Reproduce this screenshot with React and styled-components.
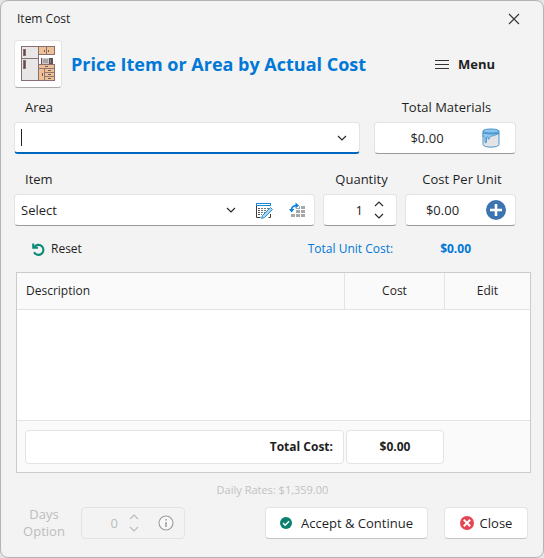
import React, { useState } from 'react';
import styled, { createGlobalStyle } from 'styled-components';

const GlobalStyle = createGlobalStyle`
  * {
    box-sizing: border-box;
  }
  body {
    margin: 0;
    background: #e4e4e4;
    color: #1f1f1f;
    font-family: 'Open Sans', 'Noto Sans', sans-serif;
    font-size: 13px;
    line-height: 18px;
  }
  button, input, select {
    font: inherit;
    color: inherit;
  }
`;

const CloseIcon = () => (
  <svg width='12' height='12' viewBox='0 0 12 12' fill='none' stroke='#333' strokeWidth='1.1'>
    <path d='M1 1l10 10M11 1L1 11' />
  </svg>
);

const KitchenIcon = () => (
  <svg width='36' height='36' viewBox='0 0 36 36' stroke='#8a6f72' strokeWidth='1'>
    <rect x='1.5' y='0.5' width='17' height='12' fill='#e8e6e6' />
    <rect x='1.5' y='12.5' width='17' height='22' fill='#e8e6e6' />
    <rect x='3.5' y='3.5' width='2' height='6' fill='#5d4a50' />
    <rect x='3.5' y='14.5' width='2' height='8' fill='#5d4a50' />
    <rect x='18.5' y='0.5' width='8' height='8' fill='#edc096' />
    <rect x='26.5' y='0.5' width='8' height='8' fill='#edc096' />
    <path d='M24.5 4v2M28.5 4v2' stroke='#7a5a55' />
    <rect x='21' y='12' width='12' height='6' fill='#5f5058' stroke='none' />
    <rect x='22.5' y='12.5' width='6' height='5' fill='#a9a3a8' stroke='#cfcacd' />
    <path d='M30.5 13v4' stroke='#8c7d85' />
    <rect x='18.5' y='18.5' width='16' height='16' fill='#edc096' />
    <path d='M18 22.500h17M24.500 22.500v12M24.500 26.500h10M24.500 30.500h10' strokeWidth='0.900' />
    <path d='M25 20.500h3M28 24.500h3M28 28.500h3M28 32.500h3M22.500 27v3' stroke='#7a5a55' />
  </svg>
);

const MenuIcon = () => (
  <svg width='14' height='11' viewBox='0 0 14 11' stroke='#333' strokeWidth='1'>
    <path d='M0 1.5h14M0 5.5h14M0 9.5h14' />
  </svg>
);

const Chevron = ({ up, color = '#2b2b2b' }) => (
  <svg width='10' height='6' viewBox='0 0 10 6' fill='none' stroke={color} strokeWidth='1.2'>
    <path d={up ? 'M1 5l4-4 4 4' : 'M1 1l4 4 4-4'} />
  </svg>
);

const BucketIcon = () => (
  <svg width='18' height='20' viewBox='0 0 18 20' stroke='#4a94cc' strokeWidth='1'>
    <path d='M1 3v13.500c0 3.500 16 3.500 16 0V3z' fill='#e4e3e5' />
    <path
      d='M1 5v3.500c1 0 1.800 0 2 1.500v4c0 1.200 1.500 1.200 1.500 0V9.500c0-1 1.500-1 1.500 0v1c0 1 1.500 1 1.500 0C7.500 7.500 10 8.500 12 7.500L17 5.500z'
      fill='#8fc8f0'
      strokeWidth='0.900'
    />
    <ellipse cx='9' cy='3' rx='8' ry='2' fill='#8ac5ef' />
    <path d='M1 4.500c3 2 13 2 16 0' fill='none' />
  </svg>
);

const EditListIcon = () => (
  <svg width='18' height='17' viewBox='0 0 18 17' fill='none'>
    <path d='M1.500 4v11.500h4M15.500 12v3.500h-2' stroke='#3c3c3c' />
    <rect x='1.500' y='1.500' width='14' height='2' stroke='#1f86d0' fill='#fff' />
    <path d='M3 6.500h2M3 8.500h2M3 10.500h2M3 12.500h2' stroke='#555' />
    <path d='M6 6.500h8M6 8.500h6M6 10.500h4M6 12.500h1' stroke='#777' strokeDasharray='2 1' />
    <path d='M15.500 5.500l2 2-8 8-3 1 1-3z' fill='#a6d6f5' stroke='#2f92d6' />
  </svg>
);

const GridIcon = () => (
  <svg width='17' height='16' viewBox='0 0 17 16'>
    <path
      d='M7 4h4v3H7zM12 4h4v3h-4zM7 8h4v3H7zM12 8h4v3h-4zM2 12h4v3H2zM7 12h4v3H7zM12 12h4v3h-4z'
      fill='#a5a8a9'
    />
    <path d='M7 3h3v3H7z' fill='#fff' />
    <path d='M2.500 8.500C2.500 5 4.500 3.500 8 3.500' fill='none' stroke='#0f7fdb' strokeWidth='1.600' />
    <path d='M6.500 0.500L10 3.500 6.500 6.500zM0 7h5.500L2.500 10.500z' fill='#0f7fdb' />
  </svg>
);

const PlusIcon = () => (
  <svg width='20' height='20' viewBox='0 0 20 20'>
    <circle cx='10' cy='10' r='10' fill='#3c74b0' />
    <path d='M10 4v12M4 10h12' stroke='#fff' strokeWidth='2.600' />
  </svg>
);

const ResetIcon = () => (
  <svg width='13' height='13' viewBox='0 0 13 13' fill='none' stroke='#0b8a78'>
    <path d='M2.300 4A5 5 0 1 1 2 9.200' strokeWidth='2.100' />
    <path d='M1.200 0.500v4.300h4.800' strokeWidth='2' />
  </svg>
);

const InfoIcon = () => (
  <svg width='16' height='16' viewBox='0 0 16 16' fill='none' stroke='#9a9a9a'>
    <circle cx='8' cy='8' r='7' fill='#f8f8f8' strokeWidth='1.100' />
    <path d='M8 7v5M8 4v1.500' strokeWidth='1.500' />
  </svg>
);

const CheckIcon = () => (
  <svg width='12' height='12' viewBox='0 0 12 12'>
    <circle cx='6' cy='6' r='6' fill='#07806f' />
    <path d='M3 6l2.200 2.200L9 4.200' fill='none' stroke='#fff' strokeWidth='1.500' />
  </svg>
);

const CancelIcon = () => (
  <svg width='14' height='14' viewBox='0 0 14 14'>
    <circle cx='7' cy='7' r='7' fill='#e64553' />
    <path d='M3.800 3.800l6.400 6.400M10.200 3.800l-6.400 6.400' stroke='#fff' strokeWidth='2' />
  </svg>
);

function Stepper({ name, disabled, onStep }) {
  const color = disabled ? '#bdbdbd' : '#2b2b2b';
  return (
    <StepperButtons>
      <IconButton type='button' aria-label={`Increase ${name}`} disabled={disabled} onClick={() => onStep(1)}>
        <Chevron up color={color} />
      </IconButton>
      <IconButton type='button' aria-label={`Decrease ${name}`} disabled={disabled} onClick={() => onStep(-1)}>
        <Chevron color={color} />
      </IconButton>
    </StepperButtons>
  );
}

function App() {
  const [area, setArea] = useState('');
  const [quantity, setQuantity] = useState(1);

  return (
    <>
      <GlobalStyle />
      <Dialog role='dialog' aria-labelledby='dialog-title'>
        <TitleBar>
          <span id='dialog-title'>Item Cost</span>
          <IconButton type='button' aria-label='Close window'>
            <CloseIcon />
          </IconButton>
        </TitleBar>

        <Header>
          <PictureButton type='button' aria-label='Kitchen'>
            <KitchenIcon />
          </PictureButton>
          <Heading>Price Item or Area by Actual Cost</Heading>
          <MenuButton type='button'>
            <MenuIcon />
            Menu
          </MenuButton>
        </Header>

        <FieldRow $gap={14}>
          <Field>
            <Label htmlFor='area' $left>Area</Label>
            <Box $active>
              {area === '' && <Caret />}
              <TextInput id='area' value={area} onChange={e => setArea(e.target.value)} />
              <ChevronButton type='button' aria-label='Show areas'>
                <Chevron />
              </ChevronButton>
            </Box>
          </Field>
          <Field $width={142}>
            <Label htmlFor='materials'>Total Materials</Label>
            <Box>
              <TextInput id='materials' $align='center' value='$0.00' readOnly />
              <BoxButton type='button' aria-label='Materials'>
                <BucketIcon />
              </BoxButton>
            </Box>
          </Field>
        </FieldRow>

        <FieldRow $gap={8}>
          <Field>
            <Label htmlFor='item' $left>Item</Label>
            <Box>
              <SelectWrap>
                <Select id='item' defaultValue='Select'>
                  <option>Select</option>
                </Select>
                <Chevron />
              </SelectWrap>
              <ItemTools>
                <IconButton type='button' aria-label='Edit items'>
                  <EditListIcon />
                </IconButton>
                <IconButton type='button' aria-label='Refresh items'>
                  <GridIcon />
                </IconButton>
              </ItemTools>
            </Box>
          </Field>
          <Field $width={74}>
            <Label htmlFor='quantity'>Quantity</Label>
            <Box>
              <TextInput
                id='quantity'
                $align='right'
                value={quantity}
                onChange={e => setQuantity(Number(e.target.value) || 0)}
              />
              <Stepper name='quantity' onStep={n => setQuantity(Math.max(0, quantity + n))} />
            </Box>
          </Field>
          <Field $width={111}>
            <Label htmlFor='unit-cost'>Cost Per Unit</Label>
            <Box>
              <TextInput id='unit-cost' $align='center' value='$0.00' readOnly />
              <AddButton type='button' aria-label='Add item'>
                <PlusIcon />
              </AddButton>
            </Box>
          </Field>
        </FieldRow>

        <SummaryRow>
          <ResetButton type='button'>
            <ResetIcon />
            Reset
          </ResetButton>
          <UnitCost>
            Total Unit Cost:
            <strong>$0.00</strong>
          </UnitCost>
        </SummaryRow>

        <Table>
          <colgroup>
            <col />
            <CostCol />
            <EditCol />
          </colgroup>
          <thead>
            <tr>
              <HeadCell $left>Description</HeadCell>
              <HeadCell>Cost</HeadCell>
              <HeadCell>Edit</HeadCell>
            </tr>
          </thead>
          <tbody>
            <tr>
              <BodyCell colSpan={3} />
            </tr>
          </tbody>
          <tfoot>
            <tr>
              <FootCell $first>
                <TotalBox $align='right'>Total Cost:</TotalBox>
              </FootCell>
              <FootCell>
                <TotalBox>$0.00</TotalBox>
              </FootCell>
              <FootCell />
            </tr>
          </tfoot>
        </Table>

        <DailyRates>Daily Rates: $1,359.00</DailyRates>

        <Footer>
          <DaysLabel htmlFor='days'>Days Option</DaysLabel>
          <DaysBox $disabled>
            <TextInput id='days' $align='right' value='0' disabled readOnly />
            <Stepper name='days' disabled />
            <InfoButton type='button' aria-label='About days option' disabled>
              <InfoIcon />
            </InfoButton>
          </DaysBox>
          <Actions>
            <ActionButton type='button' $wide>
              <CheckIcon />
              Accept &amp; Continue
            </ActionButton>
            <ActionButton type='button'>
              <CancelIcon />
              Close
            </ActionButton>
          </Actions>
        </Footer>
      </Dialog>
    </>
  );
}

const Dialog = styled.main`
  display: flex;
  flex-direction: column;
  min-height: 100vh;
  padding: 0 12px 16px 13px;
  background: #f3f3f3;
  border: 1px solid #b4b4b4;
  border-radius: 8px;
`;

const TitleBar = styled.div`
  display: flex;
  align-items: center;
  justify-content: space-between;
  height: 36px;
  padding: 0 11px 0 3px;
  font-size: 12px;
`;

const IconButton = styled.button`
  display: flex;
  align-items: center;
  justify-content: center;
  padding: 0;
  background: none;
  border: 0;
`;

const Header = styled.header`
  display: flex;
  align-items: center;
  padding: 3px 36px 0 0;
`;

const PictureButton = styled(IconButton)`
  width: 48px;
  height: 48px;
  background: #fff;
  border: 1px solid #e3e3e3;
  border-bottom-color: #aaa;
  border-radius: 4px;
`;

const Heading = styled.h1`
  flex: 1;
  margin: 0 0 0 9px;
  color: #0078d7;
  font-size: 18px;
  line-height: 24px;
  font-weight: 700;
  white-space: nowrap;
`;

const MenuButton = styled(IconButton)`
  gap: 9px;
  font-weight: 700;
`;

const FieldRow = styled.div`
  display: flex;
  gap: ${props => props.$gap}px;
  padding: 9px 15px 0 0;

  & + & {
    padding-top: 15px;
  }
`;

const Field = styled.div`
  display: flex;
  flex-direction: column;
  gap: 5px;
  min-width: 0;
  flex: ${props => props.$width ? `0 0 ${props.$width}px` : '1'};
`;

const Label = styled.label`
  padding-left: ${props => props.$left ? '11px' : '3px'};
  text-align: ${props => props.$left ? 'left' : 'center'};
  white-space: nowrap;
  line-height: 20px;
`;

const Box = styled.div`
  display: flex;
  align-items: center;
  height: 32px;
  background: ${props => props.$disabled ? 'transparent' : '#fff'};
  border: 1px solid #e3e3e3;
  border-bottom: ${props => props.$active ? '2px solid #0067c0' : '1px solid #9a9a9a'};
  border-radius: 4px;
  ${props => props.$disabled && 'border-bottom-color: #e3e3e3;'}
`;

const Caret = styled.span`
  width: 1px;
  height: 17px;
  margin-left: 6px;
  background: #222;
`;

const TextInput = styled.input`
  flex: 1;
  min-width: 0;
  padding: 0;
  background: none;
  border: 0;
  outline: 0;
  text-align: ${props => props.$align || 'left'};
`;

const ChevronButton = styled(IconButton)`
  width: 34px;
  height: 100%;
`;

const BoxButton = styled(IconButton)`
  width: 36px;
  padding-right: 12px;
`;

const AddButton = styled(IconButton)`
  width: 36px;
  padding-right: 3px;
`;

const SelectWrap = styled.div`
  display: flex;
  align-items: center;
  flex: 1;
  min-width: 0;
`;

const Select = styled.select`
  flex: 1;
  min-width: 0;
  padding: 0 0 0 6px;
  background: none;
  border: 0;
  outline: 0;
  appearance: none;
`;

const ItemTools = styled.div`
  display: flex;
  align-items: center;
  gap: 16px;
  padding: 0 8px 0 19px;
`;

const StepperButtons = styled.div`
  display: flex;
  flex-direction: column;
  gap: 6px;
  padding: 0 12px 0 11px;
`;

const SummaryRow = styled.div`
  display: flex;
  align-items: center;
  justify-content: space-between;
  padding: 14px 60px 14px 18px;
  font-size: 12px;
`;

const ResetButton = styled(IconButton)`
  gap: 6px;
`;

const UnitCost = styled.div`
  display: flex;
  gap: 47px;
  color: #0078d7;
`;

const Table = styled.table`
  width: calc(100% - 2px);
  margin-left: 2px;
  table-layout: fixed;
  border-collapse: separate;
  border-spacing: 0;
  background: #fff;
  border: 1px solid #ccc;
  font-size: 12px;
`;

const CostCol = styled.col`
  width: 100px;
`;

const EditCol = styled.col`
  width: 86px;
`;

const HeadCell = styled.th`
  height: 37px;
  padding: 0 9px;
  background: #fafafa;
  border-bottom: 1px solid #e3e3e3;
  font-weight: 400;
  text-align: ${props => props.$left ? 'left' : 'center'};

  & + & {
    border-left: 1px solid #e3e3e3;
  }
`;

const BodyCell = styled.td`
  height: 110px;
  padding: 0;
`;

const FootCell = styled.td`
  height: 52px;
  padding: ${props => props.$first ? '0 0 0 8px' : '0 0 0 2px'};
  background: #fafafa;
  border-top: 1px solid #e3e3e3;
`;

const TotalBox = styled.div`
  height: 34px;
  padding: 0 10px;
  background: #fff;
  border: 1px solid #e3e3e3;
  border-radius: 4px;
  font-weight: 700;
  line-height: 32px;
  text-align: ${props => props.$align || 'center'};
`;

const DailyRates = styled.p`
  margin: 8px 0 7px;
  color: #c2c2c2;
  font-size: 11px;
  text-align: center;
`;

const Footer = styled.footer`
  display: flex;
  align-items: center;
  padding-right: 3px;
`;

const DaysLabel = styled.label`
  width: 60px;
  margin-right: 7px;
  color: #bdbdbd;
  line-height: 17px;
  text-align: center;
`;

const DaysBox = styled(Box)`
  width: 104px;
  color: #bdbdbd;
`;

const InfoButton = styled(IconButton)`
  padding: 0 10px 0 7px;
`;

const Actions = styled.div`
  display: flex;
  justify-content: flex-end;
  flex: 1;
  gap: 16px;
`;

const ActionButton = styled(IconButton)`
  width: ${props => props.$wide ? '163px' : '84px'};
  height: 32px;
  gap: ${props => props.$wide ? '9px' : '6px'};
  background: #fff;
  border: 1px solid #e3e3e3;
  border-bottom-color: #c6c6c6;
  border-radius: 4px;
  white-space: nowrap;
`;

export default App;
